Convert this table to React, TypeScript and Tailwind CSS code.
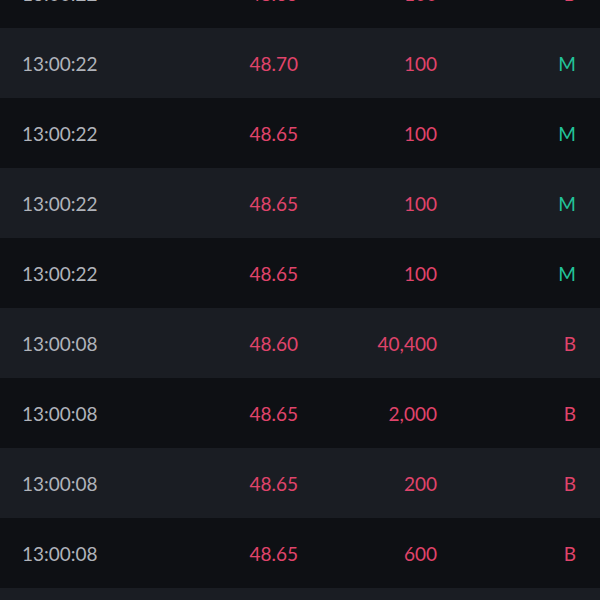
import React from "react";

type Row = { t: string; p: string; v: string; k: "B" | "M" };

const rows: Row[] = [
  { t: "13:00:22", p: "48.65", v: "100", k: "B" },
  { t: "13:00:22", p: "48.70", v: "100", k: "M" },
  { t: "13:00:22", p: "48.65", v: "100", k: "M" },
  { t: "13:00:22", p: "48.65", v: "100", k: "M" },
  { t: "13:00:22", p: "48.65", v: "100", k: "M" },
  { t: "13:00:08", p: "48.60", v: "40,400", k: "B" },
  { t: "13:00:08", p: "48.65", v: "2,000", k: "B" },
  { t: "13:00:08", p: "48.65", v: "200", k: "B" },
  { t: "13:00:08", p: "48.65", v: "600", k: "B" },
  { t: "13:00:08", p: "48.65", v: "300", k: "B" },
];

export default function App() {
  return (
    <div
      className="w-[600px] h-[600px] overflow-hidden bg-[#0e1014]"
      style={{ fontFamily: "Lato, 'Noto Sans', sans-serif" }}
    >
      <div className="-mt-[42px] flex flex-col">
        {rows.map((r, i) => (
          <div
            key={i}
            className={`grid grid-cols-[1fr_139px_139px_139px] items-center h-[70px] pl-[22px] pr-[24px] pt-[2px] text-[19px] ${
              i % 2 === 0 ? "bg-[#0e1014]" : "bg-[#1a1d23]"
            }`}
          >
            <span className="text-[#b0b3ba]">{r.t}</span>
            <span className="text-right text-[#e0446b]">{r.p}</span>
            <span className="text-right text-[#e0446b]">{r.v}</span>
            <span
              className={`text-right ${
                r.k === "M" ? "text-[#22c39a]" : "text-[#e0446b]"
              }`}
            >
              {r.k}
            </span>
          </div>
        ))}
      </div>
    </div>
  );
}
